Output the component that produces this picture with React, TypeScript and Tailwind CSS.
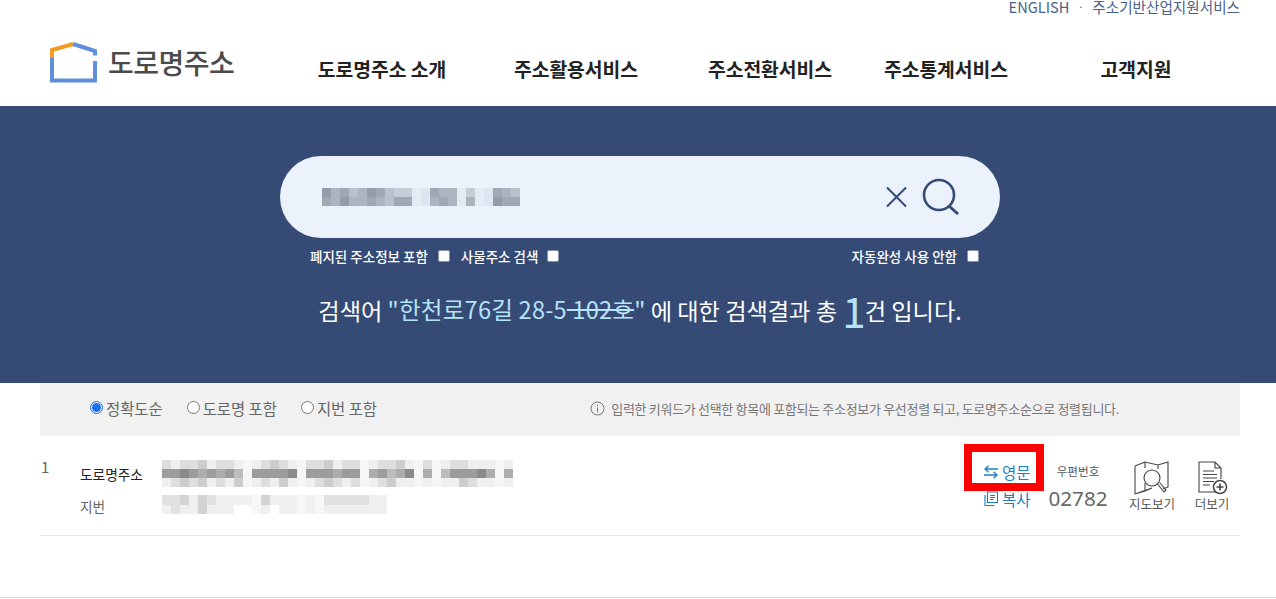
const font = { fontFamily: '"Noto Sans CJK KR", "Noto Sans", sans-serif' };

const NAV = [
  { label: "도로명주소 소개", w: "w-[194px]" },
  { label: "주소활용서비스", w: "w-[194px]" },
  { label: "주소전환서비스", w: "w-[194px]" },
  { label: "주소통계서비스", w: "w-[158px]" },
  { label: "고객지원", w: "w-[222px]" },
];

// grey levels for the pixelated (privacy-blurred) text, 0 = none, 9 = darkest
const SEARCH_BLUR = [
  "7564576433 1655 3 1654",
  "6575565466 1565 5 1766",
];
const ROAD_BLUR = [
  "212231221 12321 223122 12231 2 122111 1",
  "667656564 66667 666566 56457 5 466675 5",
  "123231213 12131 123212 12311 1 113211 1",
];
const JIBUN_BLUR = [
  "2231321111 3111 1 2222211",
  "1211311100 1011 1 1111111",
];

function Mosaic({ rows, cell, height, tint }: { rows: string[]; cell: number; height: number; tint: string }) {
  return (
    <div className="flex flex-col blur-[0.6px]">
      {rows.map((r, i) => (
        <div key={i} className="flex">
          {r.split("").map((c, j) => (
            <span key={j} style={{ width: cell, height, backgroundColor: tint, opacity: c === " " ? 0.06 : Number(c) / 9 }} />
          ))}
        </div>
      ))}
    </div>
  );
}

function Logo() {
  return (
    <svg width="47" height="41" viewBox="0 0 47 41" fill="none" strokeWidth="4">
      <path d="M2 16V38.5H45V19" stroke="#5f8fdc" />
      <path d="M2 16V8L23 2" stroke="#f39a26" />
      <path d="M23 2L45 9V13.5" stroke="#5f8fdc" />
    </svg>
  );
}

function Check() {
  return <span className="block w-3 h-3 bg-white rounded-[2px] border border-[#8a94a8]" />;
}

function Radio({ checked, label }: { checked?: boolean; label: string }) {
  return (
    <label className="flex items-center gap-[3px] text-[15.4px] leading-[20px] text-[#666]">
      {checked ? (
        <span className="w-[13px] h-[13px] rounded-full border border-[#1a73e8] flex items-center justify-center">
          <span className="w-[9px] h-[9px] rounded-full bg-[#1a73e8]" />
        </span>
      ) : (
        <span className="w-[13px] h-[13px] rounded-full border border-[#777] bg-white" />
      )}
      {label}
    </label>
  );
}

export default function App() {
  return (
    <div style={font} className="relative h-[599px] overflow-hidden bg-white">
      {/* top */}
      <header className="h-[106px]">
        <div className="flex justify-end items-center h-[14px] pr-[36px] text-[14.6px] leading-[14px] text-[#4a6187]">
          <span>ENGLISH</span>
          <span className="w-[23px] text-center text-[10px]">·</span>
          <span>주소기반산업지원서비스</span>
        </div>
        <div className="flex items-start pt-[27px] pl-[50px]">
          <div className="flex items-center gap-[11px] w-[235px]">
            <Logo />
            <span className="text-[28px] leading-[42px] font-medium text-[#4a4a4a] tracking-[-0.5px]">도로명주소</span>
          </div>
          <nav className="flex pt-[15px]">
            {NAV.map((n) => (
              <a key={n.label} className={`${n.w} text-center text-[19.3px] leading-[26px] font-bold text-[#222]`}>
                {n.label}
              </a>
            ))}
          </nav>
        </div>
      </header>

      {/* search banner */}
      <section className="h-[277px] bg-[#354a75] pt-[50px]">
        <div className="ml-[280px] w-[720px] h-[82px] rounded-[41px] bg-[#ebf2fc] flex items-center pl-[42px] pr-[40px]">
          <Mosaic rows={SEARCH_BLUR} cell={9} height={9} tint="#7d8290" />
          <div className="ml-auto flex items-center gap-[14px]">
            <svg width="24" height="24" viewBox="0 0 24 24" fill="none" stroke="#354a75" strokeWidth="2">
              <path d="M3 2.5L22 21.5M22 2.5L3 21.5" />
            </svg>
            <svg width="38" height="38" viewBox="0 0 38 38" fill="none" stroke="#354a75" strokeWidth="2.6">
              <circle cx="17" cy="17" r="15" />
              <path d="M27 28L36 36" strokeWidth="3" />
            </svg>
          </div>
        </div>
        <div className="ml-[280px] w-[720px] flex items-center h-[14px] mt-[11px] pl-[30px] pr-[21px] text-[13.5px] font-medium text-white">
          <span>폐지된 주소정보 포함</span>
          <span className="ml-[10px]"><Check /></span>
          <span className="ml-[11px]">사물주소 검색</span>
          <span className="ml-[9px]"><Check /></span>
          <span className="ml-auto">자동완성 사용 안함</span>
          <span className="ml-[10px]"><Check /></span>
        </div>
        <p className="ml-[280px] w-[720px] mt-[22px] flex items-center justify-center h-[50px] text-[23.2px] text-white whitespace-pre">
          검색어 <span className="text-[#b5e3f7] text-[23.6px] tracking-[0.2px]">"한천로76길 28-5<span className="line-through"> 102호</span>"</span> 에 대한 검색결과 총 <span className="text-[42px] leading-[50px] text-[#b5e3f7] tracking-[-7px] pr-[1px]">1</span> 건 입니다.
        </p>
      </section>

      {/* sort options */}
      <div className="ml-[40px] mr-[36px] h-[53px] bg-[#f1f1f1] flex items-center pl-[50px] pr-[121px] pb-[4px]">
        <div className="flex gap-[24px]">
          <Radio checked label="정확도순" />
          <Radio label="도로명 포함" />
          <Radio label="지번 포함" />
        </div>
        <div className="ml-auto flex items-center gap-[6px] pt-[2px] text-[13px] text-[#777] tracking-[-0.31px]">
          <svg width="15" height="15" viewBox="0 0 15 15" fill="none" stroke="#777">
            <circle cx="7.5" cy="7.5" r="6.5" />
            <path d="M7.5 6.5V11.5M7.5 3.5V5" />
          </svg>
          입력한 키워드가 선택한 항목에 포함되는 주소정보가 우선정렬 되고, 도로명주소순으로 정렬됩니다.
        </div>
      </div>

      {/* result row */}
      <div className="ml-[40px] mr-[36px] h-[100px] border-b border-[#e8e8e8] flex">
        <span className="w-[40px] pl-px pt-[22px] text-[15px] leading-[18px] text-[#666]">1</span>
        <div className="w-[82px] pt-[28px] leading-[20px]">
          <div className="text-[13.7px] text-[#222]">도로명주소</div>
          <div className="mt-[12px] text-[13.7px] text-[#666]">지번</div>
        </div>
        <div className="pt-[24px]">
          <Mosaic rows={ROAD_BLUR} cell={9} height={9} tint="#6a6a6a" />
          <div className="mt-[8px]">
            <Mosaic rows={JIBUN_BLUR} cell={9} height={9.5} tint="#7a7a7a" />
          </div>
        </div>

        <div className="ml-auto flex pt-[25px]">
          <div className="w-[48px] text-[15.5px] leading-[22px] text-[#1a7fc4] whitespace-nowrap">
            <div className="flex items-center gap-[3px] h-[22px]">
              <svg className="shrink-0" width="16" height="14" viewBox="0 0 16 14" fill="none" stroke="#1a7fc4" strokeWidth="1.3">
                <path d="M15 4H2M5.5 .8L2 4l3.5 3.2M1 10h13M10.5 6.8L14 10l-3.5 3.2" />
              </svg>
              영문
            </div>
            <div className="flex items-center gap-[3px] h-[22px] mt-[5px]">
              <svg className="shrink-0" width="16" height="16" viewBox="0 0 16 16" fill="none" stroke="#1a7fc4" strokeWidth="1.1">
                <path d="M4.5 1H14.5V11.5H4.5ZM2 4V14.5H11.5M7 4.5h5M7 6.5h5M7 8.5h3.5" />
              </svg>
              복사
            </div>
          </div>
          <div className="w-[94px] flex flex-col items-center">
            <span className="text-[11.6px] leading-[16px] mt-[2px] text-[#555]">우편번호</span>
            <span className="mt-[6px] text-[20.6px] leading-[26px] text-[#666]" style={{ fontFamily: '"Noto Sans", sans-serif' }}>02782</span>
          </div>
          <div className="w-[56px] pr-[2px] flex flex-col items-center">
            <svg width="36" height="34" viewBox="0 0 36 34" fill="none" stroke="#444" strokeWidth="1.1">
              <path d="M1 5L11 1L24 4L34 1V26L29 28M18 27L11 30L1 33ZM1 5V33M11 1V7M11 22V30M24 4V8" />
              <circle cx="18" cy="17" r="8" />
              <path d="M23.5 23L30 31L32 29L25.5 21.5" />
            </svg>
            <span className="mt-[1px] text-[12.5px] leading-[16px] text-[#555]">지도보기</span>
          </div>
          <div className="w-[56px] flex flex-col items-center pl-[6px]">
            <svg width="32" height="34" viewBox="0 0 32 34" fill="none" stroke="#444" strokeWidth="1.1">
              <path d="M20 31H3V1H19L25 7V18M19 1V7H25" />
              <path d="M7 10H18M7 13.5H21M7 17H21M7 20.5H18M7 24H14" />
              <circle cx="24" cy="26" r="6.5" strokeWidth="1.5" />
              <path d="M24 22.5V29.5M20.5 26H27.5" strokeWidth="1.6" />
            </svg>
            <span className="mt-[1px] text-[12.5px] leading-[16px] text-[#555]">더보기</span>
          </div>
          <div className="w-[3px]" />
        </div>
      </div>

      {/* bottom rule */}
      <div className="absolute left-0 right-0 top-[597px] h-px bg-[#ddd]" />
      {/* red annotation */}
      <div className="absolute left-[964px] top-[444px] w-[80px] h-[47px] border-[8px] border-[#ff0000]" />
    </div>
  );
}
